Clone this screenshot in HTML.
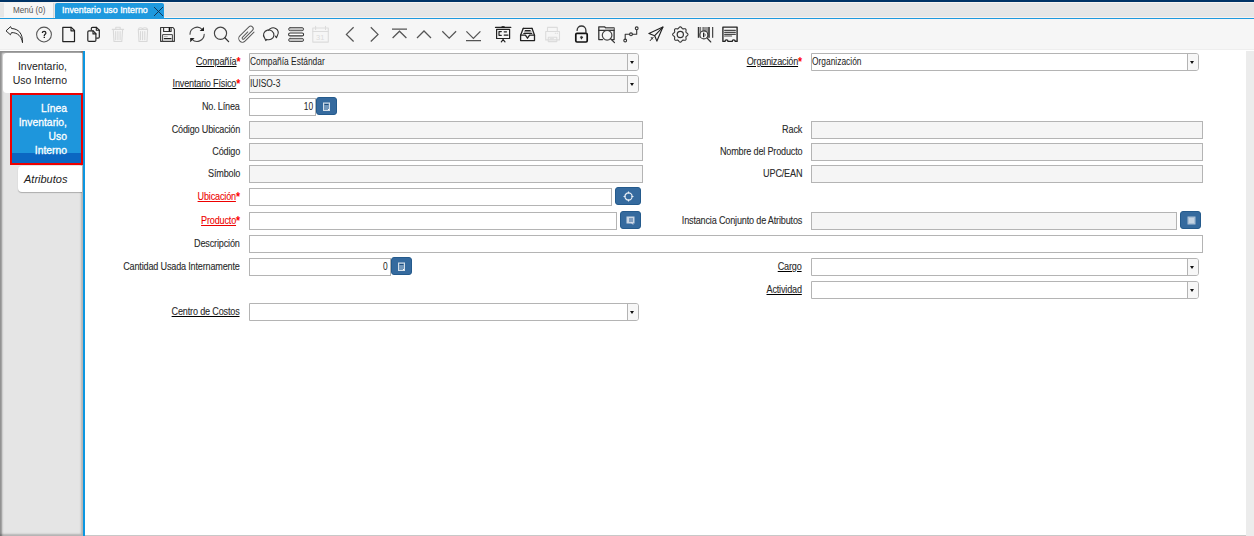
<!DOCTYPE html>
<html><head><meta charset="utf-8">
<style>
*{box-sizing:border-box;margin:0;padding:0}
html,body{width:1254px;height:536px;overflow:hidden;background:#fff;font-family:"Liberation Sans",sans-serif;position:relative}
.a{position:absolute}
.lbl{position:absolute;font-size:10.5px;line-height:12px;height:12px;color:#2a2a2a;white-space:nowrap;text-align:right;letter-spacing:-0.2px;-webkit-text-stroke:0.1px #2a2a2a;transform:scaleX(.865);transform-origin:100% 50%}
.lbl.l{right:1014px}
.lbl.r{right:453px}
.u{text-decoration:underline;text-decoration-color:#000}
.red{color:#e00;-webkit-text-stroke-color:#e00;text-decoration-color:#e00}
.ast{color:#f00;-webkit-text-stroke:0;font-size:12px;font-weight:bold;position:relative;top:2px;margin-left:0px;display:inline-block;line-height:10px;vertical-align:top}
.inp{position:absolute;height:18px;border:1px solid #b4b4b4;background:#fff}
.ro{background:#f5f5f5}
.txt{position:absolute;left:0;top:2px;font-size:10px;line-height:12px;color:#222;white-space:nowrap;transform:scaleX(.84);transform-origin:0 50%}
.cb{position:absolute;height:18px;border:1px solid #b4b4b4;border-radius:0 3px 3px 0;background:#fff}
.cbb{position:absolute;right:0;top:0;width:11px;height:16px;border-left:1px solid #b4b4b4;background:#f7f7f7;border-radius:0 2px 2px 0}
.cbb:after{content:"";position:absolute;left:2px;top:7px;border-left:2.5px solid transparent;border-right:2.5px solid transparent;border-top:3px solid #111}
.btn{position:absolute;height:18px;background:#356a9e;border:1px solid #245a8c;border-radius:3px}
</style></head><body>
<!-- top navy bar -->
<div class="a" style="left:0;top:0;width:1254px;height:2px;background:#003366"></div>
<!-- tab bar -->
<div class="a" style="left:0;top:2px;width:1254px;height:16px;background:#e6e6e6;border-top:1px solid #f7f3f0;border-bottom:1px solid #f7f3f0"></div>
<div class="a" style="left:4px;top:3px;width:50px;height:15px;background:#f6f6f6;border-right:1px solid #d6d6d6"></div>
<div class="a" style="left:13px;top:5px;font-size:9px;line-height:11px;color:#555;white-space:nowrap;transform:scaleX(.9);transform-origin:0 50%">Menú (0)</div>
<div class="a" style="left:55px;top:3px;width:109px;height:16px;background:#1e99de;border-radius:2px 2px 0 0"></div>
<div class="a" style="left:62px;top:5px;font-size:9px;line-height:11px;color:#fff;white-space:nowrap;-webkit-text-stroke:0.3px #fff;transform:scaleX(.985);transform-origin:0 50%">Inventario uso Interno</div>
<svg class="a" style="left:153px;top:6px" width="11" height="11" viewBox="0 0 11 11"><path d="M1 1L10 10M10 1L1 10" stroke="#17324d" stroke-width="0.95"/></svg>
<div class="a" style="left:0;top:18px;width:1254px;height:1px;background:#1e99de"></div>
<!-- toolbar -->
<div class="a" style="left:0;top:19px;width:1254px;height:31px;background:#f6f6f6;border-bottom:1px solid #eee"></div>
<svg class="a" id="tb" style="left:0;top:0" width="760" height="50" viewBox="0 0 760 50" fill="none" stroke="#333" stroke-width="1.2" stroke-linejoin="round" stroke-linecap="round">
<!-- undo -->
<path d="M6.3 30.6L10.6 26.6L11.5 28.5C18.5 28.8 22.8 33.5 22.5 42.7C21.8 37 18 32.4 11.5 32.6L10.6 34.4Z" stroke="#2a2a2a" stroke-width="1"/>
<!-- help -->
<circle cx="44" cy="34.5" r="7.4" stroke="#555" stroke-width="1.05"/>
<path d="M42.3 33.1C42.3 31.9 43.1 31.3 44.1 31.3C45.1 31.3 45.9 32 45.9 32.9C45.9 34.2 44.3 34.3 44.3 35.6V36" stroke="#222" stroke-width="1.25" stroke-linecap="butt"/>
<rect x="43.6" y="36.7" width="1.4" height="1.3" fill="#222" stroke="none"/>
<!-- new -->
<path d="M62.8 27.3H71.3L74.5 30.5V41.6H62.8Z" stroke="#222" stroke-width="1.2"/>
<path d="M71 27.3V30.8H74.5" stroke="#222" stroke-width="1.2"/>
<!-- copy -->
<path d="M91.3 29.8V28.6Q91.3 27.4 92.5 27.4H96.5L99.3 30.2V36.9Q99.3 38.1 98.1 38.1H96.6" stroke="#222" stroke-width="1.15"/>
<path d="M96.3 27.4V30.3H99.3" stroke="#222" stroke-width="1.1"/>
<path d="M89 30.9H93.2L95.9 33.6V40.2Q95.9 41.4 94.7 41.4H89Q87.8 41.4 87.8 40.2V32.1Q87.8 30.9 89 30.9Z" stroke="#222" stroke-width="1.15"/>
<path d="M93 30.9V33.9H95.9" stroke="#222" stroke-width="1.1"/>
<!-- delete (disabled) -->
<g stroke="#d9d9d9" stroke-width="1.1">
<path d="M112.3 29.4H123.6M115.8 29.2V27.2H120.2V29.2"/>
<path d="M113.3 29.6L114 41.5H121.8L122.6 29.6"/>
<path d="M115.7 31.6V39.8M117.9 31.6V39.8M120.1 31.6V39.8"/>
</g>
<!-- delete selection (disabled) -->
<g stroke="#d9d9d9" stroke-width="1.1">
<path d="M138.3 29.5L139 41.5H147L147.6 29.5Z"/>
<path d="M138.5 29.3C138.5 27.2 142.5 27.2 142.5 29.3C142.5 27.2 147.3 27.2 147.3 29.3"/>
<path d="M140.5 31.5V39.8M142.6 31.5V39.8M144.8 31.5V39.8"/>
</g>
<!-- save -->
<path d="M160.6 27.5H173L174.4 29.3V41.3H160.6Z" stroke="#3a3a3a" stroke-width="1.15"/>
<path d="M163.6 27.5V31.5H171.1V27.5" stroke="#333" stroke-width="1.1"/>
<path d="M169.4 28V30.7" stroke="#111" stroke-width="1.4"/>
<path d="M162.6 41.3V34.6H172.4V41.3" stroke="#444" stroke-width="1"/>
<path d="M164.3 36.6H167.3" stroke="#aaa" stroke-width="0.9"/>
<path d="M164.3 38.7H171" stroke="#222" stroke-width="1.2"/>
<!-- refresh -->
<path d="M190 34.3A7.1 7.1 0 0 1 202.3 29.5" stroke="#444" stroke-width="1.1"/>
<path d="M204 26.9V31.1H199.6Z" fill="#222" stroke="none"/>
<path d="M204.2 34.3A7.1 7.1 0 0 1 191.9 39.1" stroke="#444" stroke-width="1.1"/>
<path d="M190.2 42.2V38H194.6Z" fill="#222" stroke="none"/>
<!-- find -->
<circle cx="220.5" cy="33.3" r="6.1" stroke="#444" stroke-width="1.15"/>
<path d="M224.9 37.8L228.6 41.6" stroke="#333" stroke-width="1.3"/>
<!-- attach -->
<g transform="translate(246.55 34.4) rotate(45)" stroke="#555" stroke-width="0.95">
<path d="M-0.85 -2.6V5A1.1 1.1 0 0 0 1.35 5V-7A2.5 2.5 0 0 0 -3.65 -7V5.85A3.65 3.65 0 0 0 3.65 5.85V-6.9"/>
</g>
<!-- chat -->
<path d="M265.8 40.6L266.7 39.4A5.2 4.9 0 1 0 264.4 37.6Z" stroke="#333" stroke-width="1.1"/>
<path d="M268.5 30.2A5.1 4.7 0 0 1 277.6 35L276.4 37.7L275.2 36" stroke="#333" stroke-width="1.1"/>
<!-- menu -->
<rect x="288.6" y="27.6" width="15" height="3.1" rx="1.55" fill="#c4c4c4" stroke="#555" stroke-width="1"/>
<rect x="288.6" y="33" width="15" height="2.9" rx="1.45" fill="#fff" stroke="#333" stroke-width="1.1"/>
<rect x="288.6" y="38.4" width="15" height="3.1" rx="1.55" fill="#c4c4c4" stroke="#555" stroke-width="1"/>
<!-- calendar disabled -->
<g stroke="#dcdcdc" stroke-width="1.1">
<path d="M312.8 28H328.3V42.1H312.8Z"/>
<path d="M312.8 31.5H328.3"/>
<path d="M315.6 26.2V29.4M325.5 26.2V29.4"/>
</g>
<text x="316" y="40.2" font-family="Liberation Sans" font-size="7.5" fill="#dcdcdc" stroke="none">31</text>
<!-- prev/next -->
<g stroke="#555" stroke-width="1.25" stroke-linecap="butt" stroke-linejoin="miter">
<path d="M353.6 27.3L346.4 34.4L353.6 41.5"/>
<path d="M370.8 27.3L378 34.4L370.8 41.5"/>
<path d="M392 29.2H407M392.6 38L399.5 31.2L406.4 38"/>
<path d="M417 38L424 31L431 38"/>
<path d="M442.3 31.2L449.2 38.1L456.1 31.2"/>
<path d="M466.4 31.4L473.4 38.4L480.4 31.4M466 40.5H481"/>
</g>
<!-- report -->
<g stroke="#222" stroke-width="1.2">
<path d="M495.5 27.4H510.8"/>
<path d="M496.6 29.3H509.6V38.5H496.6Z"/>
<path d="M501.3 31.6H499V35.3H501.3"/>
<path d="M504.2 31.8H506.5M504.2 35.1H508"/>
<path d="M503.1 38.6V39.6L501.3 41.8M503.1 39.6L505 41.8"/>
</g>
<path d="M502 26.9H504.2" stroke="#111" stroke-width="1.2"/>
<!-- archive -->
<g stroke="#222" stroke-width="1.3">
<path d="M523.3 28.3H532"/>
<path d="M523.3 28.3L520.6 35.2V40.6H534.5V35.2L532 28.3"/>
<path d="M520.6 35.2H525.4L527.5 38.2L529.6 35.2H534.5"/>
</g>
<rect x="524" y="30.8" width="7.6" height="2.6" fill="#aaa" stroke="none"/>
<path d="M525.3 30.6H530.2M523.7 33.5H531.8" stroke="#222" stroke-width="1.1"/>
<!-- print disabled -->
<g stroke="#dcdcdc" stroke-width="1.1">
<path d="M547.5 31.3V27.4H557.3V31.3"/>
<path d="M545.7 31.5H559.5V39.9H545.7Z"/>
<path d="M548.3 37.2H556.8V41.6H548.3Z"/>
<path d="M550 38.8H553.5M555.3 33.3H555.6M557.2 33.3H557.5"/>
</g>
<!-- lock -->
<rect x="575.8" y="33.4" width="11.4" height="8.6" rx="1.2" stroke="#111" stroke-width="1.7"/>
<path d="M577.1 30.4A4.4 4.4 0 0 1 585.9 30.4V33" stroke="#333" stroke-width="1.3"/>
<circle cx="581.5" cy="37.4" r="1.1" fill="#333" stroke="#333" stroke-width="0.6"/>
<path d="M581.5 37.6V38.9" stroke="#333" stroke-width="1"/>
<!-- zoom across -->
<path d="M602.5 39.6H598.8V26.8H604.5L605.8 28H614.1V39.6H612.6" stroke="#333" stroke-width="1.3"/>
<path d="M605.6 28.9H613.6" stroke="#bbb" stroke-width="1.3"/>
<path d="M598.8 30.4H614.1" stroke="#333" stroke-width="1.1"/>
<circle cx="607.1" cy="35.3" r="4.8" stroke="#444" stroke-width="1.2"/>
<path d="M610.6 38.8L614.5 42.6" stroke="#333" stroke-width="1.2"/>
<!-- workflow -->
<g stroke="#333" stroke-width="1.1">
<circle cx="625.2" cy="40.5" r="1.4"/>
<circle cx="631" cy="34.3" r="1.4"/>
<circle cx="636.7" cy="28.3" r="1.4"/>
<path d="M625.2 39.1V34.3H629.6M632.4 34.3H636.7V29.7"/>
</g>
<!-- send -->
<g stroke="#222" stroke-width="1.15">
<path d="M662.9 27.1L648.9 33.5L654.7 35.7L656.9 41.1Z"/>
<path d="M662.9 27.1L654.7 35.7"/>
<path d="M653.2 37.2L650.2 40.6M651.3 37.5L652.5 39" stroke-width="1"/>
</g>
<!-- gear -->
<path d="M687.95 34.50 L687.93 34.70 L687.87 34.90 L687.78 35.09 L687.66 35.27 L687.51 35.45 L687.34 35.62 L687.16 35.77 L686.97 35.92 L686.78 36.06 L686.60 36.19 L686.43 36.32 L686.29 36.44 L686.16 36.57 L686.06 36.71 L685.98 36.85 L685.93 37.01 L685.91 37.18 L685.91 37.36 L685.92 37.55 L685.95 37.76 L685.99 37.98 L686.02 38.22 L686.05 38.45 L686.07 38.69 L686.07 38.93 L686.05 39.16 L686.01 39.38 L685.94 39.58 L685.84 39.75 L685.71 39.91 L685.55 40.04 L685.38 40.14 L685.18 40.21 L684.96 40.25 L684.73 40.27 L684.49 40.27 L684.25 40.25 L684.02 40.22 L683.78 40.19 L683.56 40.15 L683.35 40.12 L683.16 40.11 L682.98 40.11 L682.81 40.13 L682.65 40.18 L682.51 40.26 L682.37 40.36 L682.24 40.49 L682.12 40.63 L681.99 40.80 L681.86 40.98 L681.72 41.17 L681.57 41.36 L681.42 41.54 L681.25 41.71 L681.07 41.86 L680.89 41.98 L680.70 42.07 L680.50 42.13 L680.30 42.15 L680.10 42.13 L679.90 42.07 L679.71 41.98 L679.53 41.86 L679.35 41.71 L679.18 41.54 L679.03 41.36 L678.88 41.17 L678.74 40.98 L678.61 40.80 L678.48 40.63 L678.36 40.49 L678.23 40.36 L678.09 40.26 L677.95 40.18 L677.79 40.13 L677.62 40.11 L677.44 40.11 L677.25 40.12 L677.04 40.15 L676.82 40.19 L676.58 40.22 L676.35 40.25 L676.11 40.27 L675.87 40.27 L675.64 40.25 L675.42 40.21 L675.22 40.14 L675.05 40.04 L674.89 39.91 L674.76 39.75 L674.66 39.58 L674.59 39.38 L674.55 39.16 L674.53 38.93 L674.53 38.69 L674.55 38.45 L674.58 38.22 L674.61 37.98 L674.65 37.76 L674.68 37.55 L674.69 37.36 L674.69 37.18 L674.67 37.01 L674.62 36.85 L674.54 36.71 L674.44 36.57 L674.31 36.44 L674.17 36.32 L674.00 36.19 L673.82 36.06 L673.63 35.92 L673.44 35.77 L673.26 35.62 L673.09 35.45 L672.94 35.27 L672.82 35.09 L672.73 34.90 L672.67 34.70 L672.65 34.50 L672.67 34.30 L672.73 34.10 L672.82 33.91 L672.94 33.73 L673.09 33.55 L673.26 33.38 L673.44 33.23 L673.63 33.08 L673.82 32.94 L674.00 32.81 L674.17 32.68 L674.31 32.56 L674.44 32.43 L674.54 32.29 L674.62 32.15 L674.67 31.99 L674.69 31.82 L674.69 31.64 L674.68 31.45 L674.65 31.24 L674.61 31.02 L674.58 30.78 L674.55 30.55 L674.53 30.31 L674.53 30.07 L674.55 29.84 L674.59 29.62 L674.66 29.42 L674.76 29.25 L674.89 29.09 L675.05 28.96 L675.22 28.86 L675.42 28.79 L675.64 28.75 L675.87 28.73 L676.11 28.73 L676.35 28.75 L676.58 28.78 L676.82 28.81 L677.04 28.85 L677.25 28.88 L677.44 28.89 L677.62 28.89 L677.79 28.87 L677.95 28.82 L678.09 28.74 L678.23 28.64 L678.36 28.51 L678.48 28.37 L678.61 28.20 L678.74 28.02 L678.88 27.83 L679.03 27.64 L679.18 27.46 L679.35 27.29 L679.53 27.14 L679.71 27.02 L679.90 26.93 L680.10 26.87 L680.30 26.85 L680.50 26.87 L680.70 26.93 L680.89 27.02 L681.07 27.14 L681.25 27.29 L681.42 27.46 L681.57 27.64 L681.72 27.83 L681.86 28.02 L681.99 28.20 L682.12 28.37 L682.24 28.51 L682.37 28.64 L682.51 28.74 L682.65 28.82 L682.81 28.87 L682.98 28.89 L683.16 28.89 L683.35 28.88 L683.56 28.85 L683.78 28.81 L684.02 28.78 L684.25 28.75 L684.49 28.73 L684.73 28.73 L684.96 28.75 L685.18 28.79 L685.38 28.86 L685.55 28.96 L685.71 29.09 L685.84 29.25 L685.94 29.42 L686.01 29.62 L686.05 29.84 L686.07 30.07 L686.07 30.31 L686.05 30.55 L686.02 30.78 L685.99 31.02 L685.95 31.24 L685.92 31.45 L685.91 31.64 L685.91 31.82 L685.93 31.99 L685.98 32.15 L686.06 32.29 L686.16 32.43 L686.29 32.56 L686.43 32.68 L686.60 32.81 L686.78 32.94 L686.97 33.08 L687.16 33.23 L687.34 33.38 L687.51 33.55 L687.66 33.73 L687.78 33.91 L687.87 34.10 L687.93 34.30 L687.95 34.50Z" stroke="#333" stroke-width="1.1"/>
<circle cx="680.3" cy="34.5" r="3.1" stroke="#333" stroke-width="1.2"/>
<!-- barcode -->
<g stroke="none">
<rect x="697.8" y="27" width="1.6" height="10.8" fill="#333"/>
<rect x="700.3" y="27" width="0.8" height="10.8" fill="#444"/>
<rect x="702.6" y="27" width="1" height="3.5" fill="#333"/>
<rect x="704" y="27" width="4" height="10.8" fill="#999"/>
<rect x="708.2" y="27" width="1.6" height="10.8" fill="#333"/>
<rect x="712.2" y="27" width="1" height="10.8" fill="#222"/>
</g>
<circle cx="703.9" cy="34.9" r="4" fill="#f6f6f6" stroke="#333" stroke-width="1.1"/>
<rect x="703" y="32.6" width="1.2" height="4.6" fill="#222" stroke="none"/>
<path d="M704.3 32.8L706.2 34.9L704.3 37" fill="#888" stroke="none"/>
<path d="M707 38L710.8 42" stroke="#333" stroke-width="1.1"/>
<!-- receipt -->
<path d="M722.9 27.1H737.1V41.4H735.2A1.5 1.5 0 0 0 732.2 41.4H728A1.5 1.5 0 0 0 725 41.4H722.9Z" stroke="#222" stroke-width="1.35"/>
<path d="M724.6 30.3H735.4M724.6 32.3H735.4M724.6 34.3H735.4" stroke="#4a4a4a" stroke-width="1.15"/>
<path d="M724.6 36H731.6" stroke="#4a4a4a" stroke-width="1.15"/>

</svg>
<!-- left panel -->
<div class="a" style="left:0;top:51px;width:83px;height:485px;background:#e5e5e5;box-shadow:inset 2px 2px 2px rgba(0,0,0,.38),inset -2px -2px 2px rgba(0,0,0,.22)"></div>
<div class="a" style="left:83px;top:51px;width:2px;height:485px;background:#0b96e0"></div>
<div class="a" style="left:1246px;top:51px;width:8px;height:485px;background:#ececec"></div>
<div class="a" style="left:85px;top:535px;width:1161px;height:1px;background:#c8c8c8"></div>
<!-- tabs -->
<div class="a" style="left:3px;top:53px;width:79px;height:40px;background:#fff;border-radius:4px 0 0 4px"></div>
<div class="a" style="left:3px;top:59px;width:64px;font-size:11px;line-height:14px;color:#222;text-align:right;transform:scaleX(.955);transform-origin:100% 50%">Inventario,<br>Uso Interno</div>
<div class="a" style="left:10px;top:93px;width:73px;height:72px;border:2px solid #ee0000;background:#1e96dc"></div>
<div class="a" style="left:12px;top:153px;width:69px;height:10px;background:#0b67c2"></div>
<div class="a" style="left:3px;top:101px;width:64px;font-size:11px;line-height:14px;color:#fff;text-align:right;-webkit-text-stroke:0.3px #fff;transform:scaleX(.94);transform-origin:100% 50%">Línea<br>Inventario,<br>Uso<br>Interno</div>
<div class="a" style="left:18px;top:166px;width:64px;height:26px;background:#fff;border-radius:4px 0 0 4px;box-shadow:0 1px 1px rgba(0,0,0,.25)"></div>
<div class="a" style="left:24px;top:172px;font-size:11px;line-height:14px;color:#222;font-style:italic">Atributos</div>
<!-- form -->
<div id="form">
<div class="lbl" style="right:1014px;top:55px"><span class="u">Compañía</span><span class="ast">*</span></div>
<div class="cb" style="left:249px;top:53px;width:390px;background:#f5f5f5"><div class="txt">Compañía Estándar</div><div class="cbb"></div></div>
<div class="lbl" style="right:452px;top:55px"><span class="u">Organización</span><span class="ast">*</span></div>
<div class="cb" style="left:811px;top:53px;width:388px;background:#fff"><div class="txt">Organización</div><div class="cbb"></div></div>
<div class="lbl" style="right:1014px;top:77px"><span class="u">Inventario Físico</span><span class="ast">*</span></div>
<div class="cb" style="left:249px;top:75px;width:390px;background:#f5f5f5"><div class="txt">IUISO-3</div><div class="cbb"></div></div>
<div class="lbl" style="right:1014px;top:100px">No. Línea</div>
<div class="inp" style="left:249px;top:98px;width:67px;height:18px"><div class="txt" style="left:auto;right:2px;transform-origin:100% 50%">10</div></div>
<div class="btn" style="left:316px;top:97px;width:21px"><svg class="a" style="left:5px;top:4px" width="9" height="10" viewBox="0 0 9 10"><rect x="1.5" y="1" width="6" height="7.5" fill="rgba(255,255,255,.3)" stroke="#d5e0ea" stroke-width="1"/><path d="M2.5 2.5H6.5" stroke="#1f4f80" stroke-width="1"/><path d="M6 7.5H7" stroke="#fff" stroke-width="1"/></svg></div>
<div class="lbl" style="right:1014px;top:123px">Código Ubicación</div>
<div class="inp ro" style="left:249px;top:121px;width:394px;height:18px"></div>
<div class="lbl" style="right:452px;top:123px">Rack</div>
<div class="inp ro" style="left:811px;top:121px;width:392px;height:18px"></div>
<div class="lbl" style="right:1014px;top:145px">Código</div>
<div class="inp ro" style="left:249px;top:143px;width:394px;height:18px"></div>
<div class="lbl" style="right:452px;top:145px">Nombre del Producto</div>
<div class="inp ro" style="left:811px;top:143px;width:392px;height:18px"></div>
<div class="lbl" style="right:1014px;top:167px">Símbolo</div>
<div class="inp ro" style="left:249px;top:165px;width:394px;height:18px"></div>
<div class="lbl" style="right:452px;top:167px">UPC/EAN</div>
<div class="inp ro" style="left:811px;top:165px;width:392px;height:18px"></div>
<div class="lbl" style="right:1014px;top:190px"><span class="u red">Ubicación</span><span class="ast">*</span></div>
<div class="inp" style="left:249px;top:188px;width:363px;height:18px"></div>
<div class="btn" style="left:615px;top:187px;width:26px"><svg class="a" style="left:7px;top:3px" width="11" height="11" viewBox="0 0 11 11" fill="none" stroke="#e8eef5" stroke-width="1.2"><circle cx="5.5" cy="5.5" r="3.6"/><path d="M5.5 0.5V2.5M5.5 8.5V10.5M0.5 5.5H2.5M8.5 5.5H10.5" stroke-width="1.1"/></svg></div>
<div class="lbl" style="right:1014px;top:214px"><span class="u red">Producto</span><span class="ast">*</span></div>
<div class="inp" style="left:249px;top:212px;width:368px;height:18px"></div>
<div class="btn" style="left:620px;top:211px;width:21px"><svg class="a" style="left:4.5px;top:4px" width="9" height="9" viewBox="0 0 9 9"><rect x="0.5" y="0.5" width="8" height="7" fill="#c9d6e4"/><rect x="3" y="2" width="4" height="4" fill="#7d9cbf"/><path d="M5 6L7 8.5" stroke="#dde" stroke-width="1"/></svg></div>
<div class="lbl" style="right:452px;top:214px">Instancia Conjunto de Atributos</div>
<div class="inp ro" style="left:811px;top:212px;width:366px;height:18px"></div>
<div class="btn" style="left:1180px;top:211px;width:21px"><svg class="a" style="left:6px;top:4px" width="9" height="9" viewBox="0 0 9 9"><rect x="0.5" y="0.5" width="8" height="8" fill="#a9bfd5"/><rect x="2" y="2" width="5" height="5" fill="#c4d3e2"/></svg></div>
<div class="lbl" style="right:1014px;top:237px">Descripción</div>
<div class="inp" style="left:249px;top:235px;width:954px;height:18px"></div>
<div class="lbl" style="right:1014px;top:260px">Cantidad Usada Internamente</div>
<div class="inp" style="left:249px;top:258px;width:142px;height:18px"><div class="txt" style="left:auto;right:2px;transform-origin:100% 50%">0</div></div>
<div class="btn" style="left:391px;top:257px;width:21px"><svg class="a" style="left:5px;top:4px" width="9" height="10" viewBox="0 0 9 10"><rect x="1.5" y="1" width="6" height="7.5" fill="rgba(255,255,255,.3)" stroke="#d5e0ea" stroke-width="1"/><path d="M2.5 2.5H6.5" stroke="#1f4f80" stroke-width="1"/><path d="M6 7.5H7" stroke="#fff" stroke-width="1"/></svg></div>
<div class="lbl" style="right:452px;top:260px"><span class="u">Cargo</span></div>
<div class="cb" style="left:811px;top:258px;width:388px;background:#fff"><div class="cbb"></div></div>
<div class="lbl" style="right:452px;top:283px"><span class="u">Actividad</span></div>
<div class="cb" style="left:811px;top:281px;width:388px;background:#fff"><div class="cbb"></div></div>
<div class="lbl" style="right:1014px;top:305px"><span class="u">Centro de Costos</span></div>
<div class="cb" style="left:249px;top:303px;width:390px;background:#fff"><div class="cbb"></div></div>
</div><!--/form-->
</body></html>
